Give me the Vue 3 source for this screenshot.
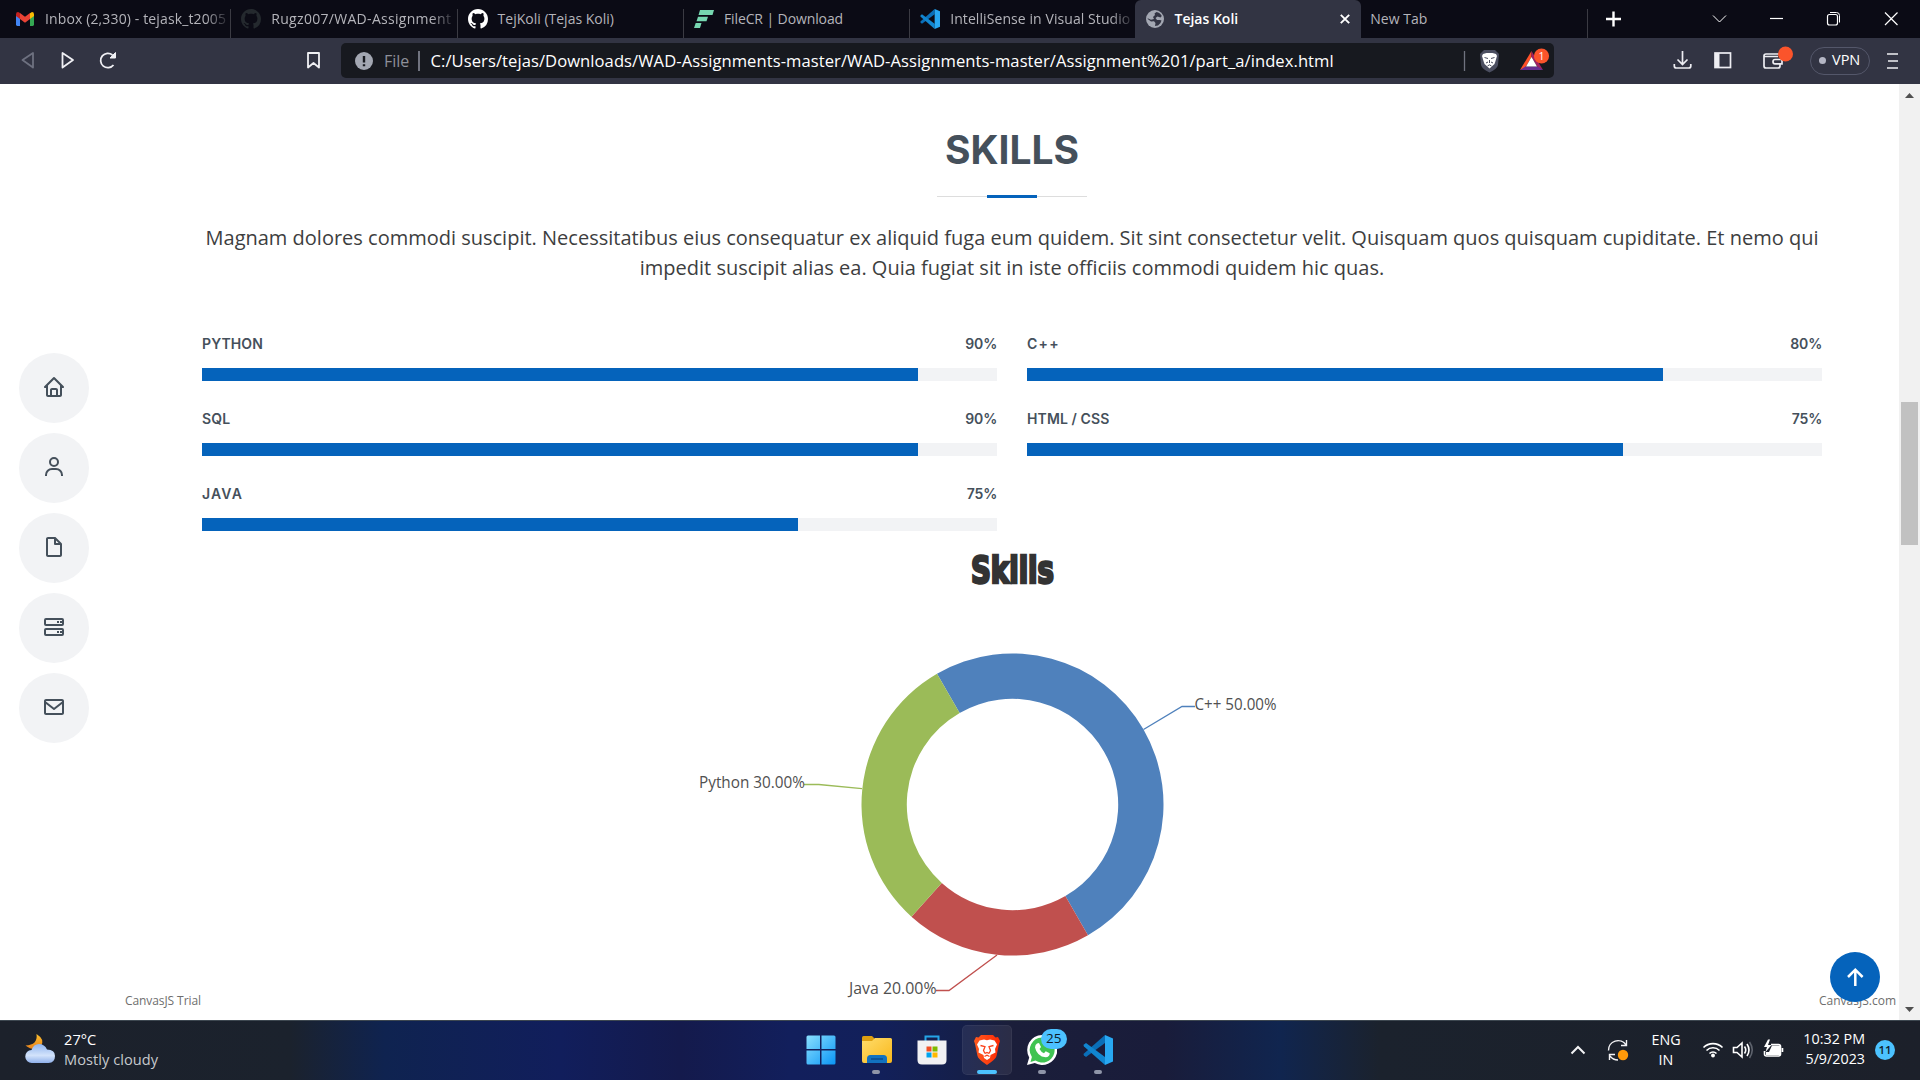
<script setup>
const github =
  'M8 0C3.58 0 0 3.58 0 8c0 3.54 2.29 6.53 5.47 7.59.4.07.55-.17.55-.38 0-.19-.01-.82-.01-1.49-2.01.37-2.53-.49-2.69-.94-.09-.23-.48-.94-.82-1.13-.28-.15-.68-.52-.01-.53.63-.01 1.08.58 1.23.82.72 1.21 1.87.87 2.33.66.07-.52.28-.87.51-1.07-1.78-.2-3.64-.89-3.64-3.95 0-.87.31-1.59.82-2.15-.08-.2-.36-1.02.08-2.12 0 0 .67-.21 2.2.82.64-.18 1.32-.27 2-.27s1.36.09 2 .27c1.53-1.04 2.2-.82 2.2-.82.44 1.1.16 1.92.08 2.12.51.56.82 1.27.82 2.15 0 3.07-1.87 3.75-3.65 3.95.29.25.54.73.54 1.48 0 1.07-.01 1.93-.01 2.2 0 .21.15.46.55.38A8.01 8.01 0 0016 8c0-4.42-3.58-8-8-8z'

const tabs = [
  { title: 'Inbox (2,330) - tejask_t2005', icon: 'gmail', fade: true, cls: 'sp-a' },
  { title: 'Rugz007/WAD-Assignment', icon: 'github-dim', fade: true, cls: 'sp-b' },
  { title: 'TejKoli (Tejas Koli)', icon: 'github' },
  { title: 'FileCR | Download', icon: 'filecr', cls: 'sp-c' },
  { title: 'IntelliSense in Visual Studio', icon: 'vscode', fade: true, cls: 'sp-d' },
  { title: 'Tejas Koli', icon: 'globe', active: true },
  { title: 'New Tab', icon: '' },
]

const leftSkills = [
  { name: 'PYTHON', value: 90 },
  { name: 'SQL', value: 90 },
  { name: 'JAVA', value: 75 },
]
const rightSkills = [
  { name: 'C++', value: 80 },
  { name: 'HTML / CSS', value: 75 },
]
const columns = [leftSkills, rightSkills]

const cx = 1012.5
const cy = 804.5
const outer = 151
const inner = 105.7
const pt = (r, deg) => {
  const a = (deg * Math.PI) / 180
  return `${(cx + r * Math.cos(a)).toFixed(2)} ${(cy + r * Math.sin(a)).toFixed(2)}`
}
const arc = (from, to) => {
  const big = to - from > 180 ? 1 : 0
  return `M${pt(outer, from)}A${outer} ${outer} 0 ${big} 1 ${pt(outer, to)}L${pt(inner, to)}A${inner} ${inner} 0 ${big} 0 ${pt(inner, from)}Z`
}
const slices = [
  { color: '#4f81bc', d: arc(-120, 60), line: 'M1143.5 729.5L1182 706.5H1195', label: 'C++ 50.00%', x: 1194.5, y: 710, w: 82 },
  { color: '#c0504e', d: arc(60, 132), line: 'M997 955L949 990.5H936', label: 'Java 20.00%', x: 849, y: 994, w: 87.5 },
  { color: '#9bbb58', d: arc(132, 240), line: 'M862 788.7L818.8 784.5H804', label: 'Python 30.00%', x: 699, y: 788, w: 106 },
]
</script>

<template>
  <div class="screen">
    <!-- tab strip -->
    <header class="tabs">
      <div v-for="t in tabs" :key="t.title" class="tab" :class="{ active: t.active, bare: !t.icon }">
        <span v-if="t.icon" class="fav">
          <svg v-if="t.icon === 'gmail'" width="18" height="14" viewBox="0 0 18 14">
            <path fill="#4285f4" d="M0 2.2V12.6Q0 14 1.3 14H4V6z" />
            <path fill="#34a853" d="M18 2.2V12.6Q18 14 16.7 14H14V6z" />
            <path fill="#c5221f" d="M0 2.2Q0 0 2 0L4 1.3V7L0 4z" />
            <path fill="#fbbc04" d="M18 2.2Q18 0 16 0L14 1.3V7L18 4z" />
            <path fill="#ea4335" d="M2 0Q3 0 4 1L9 4.8 14 1V7L9 10.7 4 7V1z" />
          </svg>
          <svg v-else-if="t.icon.startsWith('github')" width="20" height="20" viewBox="0 0 16 16">
            <path :fill="t.icon === 'github' ? '#fff' : '#24292e'" :d="github" />
          </svg>
          <svg v-else-if="t.icon === 'filecr'" width="20" height="18" viewBox="0 0 20 18">
            <path fill="#76d7b0" d="M6 0H20L18.5 5H4.5zM4 6.7H14L12.5 11.3H2.5zM1.7 13H7.5L6 18H0z" />
          </svg>
          <svg v-else-if="t.icon === 'vscode'" width="20" height="20" viewBox="0 0 30 30">
            <path fill="#0a6fb8" d="M22 0L1 18.5q-1 1 0 2L3 22 22 8z" />
            <path fill="#1186d0" d="M22 30L1 11.5q-1-1 0-2L3 8l19 14z" />
            <path fill="#28a8f2" d="M22 0l8 3.5v23L22 30z" />
          </svg>
          <svg v-else width="18" height="18" viewBox="0 0 18 18">
            <circle cx="9" cy="9" r="9" fill="#a3a7b2" />
            <path fill="#323443" d="M10.5 2Q14 2.500 15.800 6L14.500 7.500 11.500 6.500 9.500 8 11 10h3l1.500.5-1 2.500-2.500 2.500-3 .5.5-3-1.500-1.800-3 .3-3.300-2.500V8.300L5 9.800 8 9 7 7l2-2-.5-1.500z" />
          </svg>
        </span>
        <span class="title" :class="[t.cls, { fade: t.fade }]">{{ t.title }}</span>
        <svg v-if="t.active" class="close" width="10" height="10" viewBox="0 0 10 10"><path d="M.8.8l8.400 8.400M9.200.8L.8 9.200" stroke="#fff" stroke-width="1.900" /></svg>
      </div>
      <div class="win">
        <svg width="320" height="38" viewBox="1600 0 320 38" fill="none" stroke="#fff">
          <path d="M1606 19h15M1613.500 11.500v15" stroke-width="2.400" />
          <path d="M1713 15.500l6.500 6.500 6.500-6.500" stroke-width="1" />
          <path d="M1770 18.500h13" stroke-width="1.200" />
          <rect x="1827.500" y="14.500" width="10" height="10.500" rx="2" stroke-width="1.200" />
          <path d="M1830 12.500h6.500q3 0 3 3v7" stroke-width="1" />
          <path d="M1885 12.500l12.500 12.500M1897.500 12.500l-12.500 12.500" stroke-width="1.200" />
        </svg>
      </div>
    </header>

    <!-- address bar -->
    <div class="bar">
      <svg class="nav-icons" width="341" height="46" viewBox="0 38 341 46" fill="none" stroke="#f0f0f4" stroke-width="1.800" stroke-linejoin="round">
        <path d="M33 53v14.500L22.500 60z" stroke="#6e7180" />
        <path d="M62.500 53v14.500L73 60z" />
        <path d="M113.500 65A7.200 7.200 0 1 1 112.500 55" />
        <path d="M115.500 52.500v5.500h-5.500z" fill="#f0f0f4" stroke-width="1" />
        <path d="M308 53h11v14.500l-5.500-4.500-5.500 4.500z" />
      </svg>
      <div class="url">
        <svg width="18" height="18" viewBox="0 0 18 18"><circle cx="9" cy="9" r="9" fill="#a3a7b2" /><path d="M9 4v6.500M9 12.200v2" stroke="#17191f" stroke-width="2.400" /></svg>
        <span class="scheme">File</span>
        <i class="sep"></i>
        <span class="path">C:/Users/tejas/Downloads/WAD-Assignments-master/WAD-Assignments-master/Assignment%201/part_a/index.html</span>
        <svg class="shields" width="94" height="35" viewBox="1460 43 94 35">
          <path d="M1464.500 51v20" stroke="#70737f" stroke-width="1.300" />
          <path fill="#4b4e60" d="M1484 50h11l4 4-1 11q-1 4-8.500 7.500-7.500-3.500-8.500-7.500l-1-11z" />
          <path fill="#fff" d="M1483 54l3.500-1h6l3.500 1 1 2-1.500 5-1 3-5 4.500-5-4.500-1-3-1.500-5z" />
          <path fill="none" stroke="#4b4e60" stroke-width="1" d="M1484.500 57.500l3.500 1M1494.500 57.500l-3.500 1M1486 63l2-1M1493 63l-2-1M1489.500 60v3M1487.500 66l2-1.200 2 1.200" />
          <path fill="#ff5028" d="M1531.500 51L1520 70l5-2 6.500-11z" />
          <path fill="#9e1f63" d="M1531.500 51L1543 70l-5-2-6.500-11z" />
          <path fill="#662d91" d="M1520 70h23l-5.500-3.500h-12z" />
          <path fill="#fff" d="M1531.500 57l5.500 9.500h-11z" />
          <circle cx="1541.500" cy="56" r="7.600" fill="#fb542b" />
          <text x="1541.500" y="60" text-anchor="middle" font-size="10.500" fill="#fff">1</text>
        </svg>
      </div>
      <div class="tools">
        <svg width="130" height="46" viewBox="1666 38 130 46" fill="none" stroke="#ededf2" stroke-width="1.700">
          <path d="M1682.500 51v13M1677.500 59.500l5 5 5-5M1674.300 64v2q0 2 2 2h12.500q2 0 2-2v-2" />
          <rect x="1715" y="53" width="15.500" height="14.500" /><path fill="#ededf2" stroke="none" d="M1715 53h4.500v14.500h-4.500z" />
          <path d="M1780 63v3q0 2-2 2h-12q-2 0-2-2V56q0-2 2-2h13M1764 56.500h14M1782 59.500h-7q-2 0-2 2.200t2 2.200h7z" />
          <circle cx="1785.500" cy="54" r="7.500" fill="#fb542b" stroke="none" />
        </svg>
        <span class="vpn"><i></i>VPN</span>
        <svg class="menu" width="12" height="18" viewBox="0 0 12 18"><path d="M0 2h11M1 9h10M0 16h11" stroke="#f0f0f4" stroke-width="1.700" /></svg>
      </div>
    </div>

    <!-- page -->
    <main class="page">
      <div class="content">
        <h2>SKILLS</h2>
        <div class="rule"><i></i></div>
        <p>Magnam dolores commodi suscipit. Necessitatibus eius consequatur ex aliquid fuga eum quidem. Sit sint consectetur velit. Quisquam quos quisquam cupiditate. Et nemo qui impedit suscipit alias ea. Quia fugiat sit in iste officiis commodi quidem hic quas.</p>
        <div class="cols">
          <div v-for="(col, i) in columns" :key="i" class="col">
            <div v-for="s in col" :key="s.name" class="skill">
              <div class="label"><span :class="{ wide: s.name === 'JAVA' || s.name === 'C++' }">{{ s.name }}</span><span class="val">{{ s.value }}%</span></div>
              <div class="track"><div class="fill" :style="{ width: s.value + '%' }"></div></div>
            </div>
          </div>
        </div>
      </div>
      <svg class="chart" width="1899" height="480" viewBox="0 540 1899 480">
        <text class="ct" x="971" y="583" textLength="83" lengthAdjust="spacingAndGlyphs">Skills</text>
        <g v-for="s in slices" :key="s.label">
          <path :d="s.d" :fill="s.color" />
          <path :d="s.line" fill="none" :stroke="s.color" stroke-width="1.300" />
          <text class="cl" :x="s.x" :y="s.y" :textLength="s.w" lengthAdjust="spacingAndGlyphs">{{ s.label }}</text>
        </g>
        <text class="cr" x="125" y="1005" textLength="76">CanvasJS Trial</text>
        <text class="cr" x="1819" y="1005" textLength="77">CanvasJS.com</text>
      </svg>

      <nav class="side">
        <a><svg viewBox="0 0 24 24"><path d="M3 13h1v7c0 1.103.897 2 2 2h12c1.103 0 2-.897 2-2v-7h1a1 1 0 0 0 .707-1.707l-9-9a.999.999 0 0 0-1.414 0l-9 9A1 1 0 0 0 3 13zm7 7v-5h4v5h-4zm2-15.586 6 6V15l.001 5H16v-5c0-1.103-.897-2-2-2h-4c-1.103 0-2 .897-2 2v5H6v-9.586l6-6z" /></svg></a>
        <a><svg viewBox="0 0 24 24"><path d="M12 2a5 5 0 1 0 5 5 5 5 0 0 0-5-5zm0 8a3 3 0 1 1 3-3 3 3 0 0 1-3 3zm9 11v-1a7 7 0 0 0-7-7h-4a7 7 0 0 0-7 7v1h2v-1a5 5 0 0 1 5-5h4a5 5 0 0 1 5 5v1z" /></svg></a>
        <a><svg viewBox="0 0 24 24"><path d="M19.937 8.680c-.011-.032-.020-.063-.033-.094a.997.997 0 0 0-.196-.293l-6-6a.997.997 0 0 0-.293-.196c-.030-.014-.062-.022-.094-.033a.991.991 0 0 0-.259-.051C13.040 2.011 13.021 2 13 2H6c-1.103 0-2 .897-2 2v16c0 1.103.897 2 2 2h12c1.103 0 2-.897 2-2V9c0-.021-.011-.040-.013-.062a.990.990 0 0 0-.050-.258zM16.586 8H14V5.414L16.586 8zM6 20V4h6v5a1 1 0 0 0 1 1h5l.002 10H6z" /></svg></a>
        <a><svg viewBox="0 0 24 24"><path d="M20 3H4a2 2 0 0 0-2 2v4a2 2 0 0 0 2 2h16a2 2 0 0 0 2-2V5a2 2 0 0 0-2-2zm0 6H4V5h16v4zm-5-3h2v2h-2zm3 0h2v2h-2zm2 7H4a2 2 0 0 0-2 2v4a2 2 0 0 0 2 2h16a2 2 0 0 0 2-2v-4a2 2 0 0 0-2-2zm0 6H4v-4h16v4zm-5-3h2v2h-2zm3 0h2v2h-2z" /></svg></a>
        <a><svg viewBox="0 0 24 24"><path d="M20 4H4c-1.103 0-2 .897-2 2v12c0 1.103.897 2 2 2h16c1.103 0 2-.897 2-2V6c0-1.103-.897-2-2-2zm0 2v.511l-8 6.223-8-6.222V6h16zM4 18V9.044l7.386 5.745a.994.994 0 0 0 1.228 0L20 9.044 20.002 18H4z" /></svg></a>
      </nav>
      <a class="top"><svg width="50" height="50" viewBox="0 0 50 50" fill="none" stroke="#fff" stroke-width="2.500"><path d="M25.300 34V18M18 25l7.300-7.300L32.600 25" /></svg></a>
      <div class="scroll">
        <svg width="21" height="16" viewBox="0 0 21 16"><path d="M6 14h9l-4.500-5z" fill="#505050" /></svg>
        <i></i>
        <svg width="21" height="16" viewBox="0 0 21 16"><path d="M6 3h9l-4.500 5z" fill="#505050" /></svg>
      </div>
    </main>

    <!-- taskbar -->
    <footer class="task">
      <div class="weather">
        <svg width="31" height="30" viewBox="0 0 31 30">
          <defs>
            <linearGradient id="moon" x2="0" y2="1"><stop stop-color="#fcc02e" /><stop offset="1" stop-color="#e8811c" /></linearGradient>
            <linearGradient id="cloud" x2="0" y2="1"><stop stop-color="#8fb4ee" /><stop offset=".6" stop-color="#d3e3fb" /><stop offset="1" stop-color="#8fb0ea" /></linearGradient>
          </defs>
          <path fill="url(#moon)" d="M11.500 0Q21 6 15.500 12.500 9 18 .5 11.500 13 11 11.500 0z" />
          <path fill="url(#cloud)" d="M7 29a6.500 6.500 0 0 1-.5-13Q8.500 10 14 10t8 5.500Q30 15.500 30 22t-6.500 7z" />
        </svg>
        <div class="wt"><b>27°C</b><span>Mostly cloudy</span></div>
      </div>
      <div class="apps">
        <span class="app">
          <svg width="30" height="30" viewBox="0 0 30 30"><defs><linearGradient id="win" x2="1" y2="1"><stop stop-color="#8ae0ff" /><stop offset="1" stop-color="#0a95f5" /></linearGradient></defs><path fill="url(#win)" d="M2 .5h12V14H.5V2Q.5.5 2 .5zM15.500.500H28q1.500 0 1.500 1.500v12h-14zM.5 15.500H14v14H2Q.5 29.500.5 28zM15.500 15.500h14V28q0 1.500-1.500 1.500H15.500z" /></svg>
        </span>
        <span class="app folder">
          <svg width="30" height="28" viewBox="0 0 30 28"><defs><linearGradient id="fold" x2="1" y2="1"><stop stop-color="#ffdc6b" /><stop offset="1" stop-color="#f9b81b" /></linearGradient></defs><path fill="#dd9f10" d="M0 1.500Q0 0 1.500 0H10l3 3v6H0z" /><path fill="url(#fold)" d="M0 5h10l3-3h15.500Q30 2 30 3.500V25q0 2-2 2H2q-2 0-2-2z" /><path fill="#1272c0" d="M5 27v-4.500Q5 19 8.500 19h13q3.500 0 3.500 3.500V27z" /><path d="M9 23h12" stroke="#0b4c8f" stroke-width="1.500" /></svg><i></i>
        </span>
        <span class="app">
          <svg width="30" height="30" viewBox="0 0 30 30"><path d="M8.500 7V1.500h13V7" fill="none" stroke="#25a5e8" stroke-width="2" /><path fill="#f1f1f3" d="M.5 5.500h29V25q0 4.500-4.500 4.500H5Q.5 29.500.5 25z" /><path fill="#f04e24" d="M9.500 11.500h5v5h-5z" /><path fill="#7fba00" d="M15.500 11.500h5v5h-5z" /><path fill="#00a4ef" d="M9.500 17.500h5v5h-5z" /><path fill="#ffb900" d="M15.500 17.500h5v5h-5z" /></svg>
        </span>
        <span class="app on">
          <svg width="26" height="30" viewBox="0 0 26 30"><defs><linearGradient id="brv"><stop stop-color="#ff5a1f" /><stop offset="1" stop-color="#fb2a06" /></linearGradient></defs><path fill="url(#brv)" d="M7 0h12l2.500 2.500L24 2l2 4-1 3-2.500 12Q22 24 13 30 4 24 3.500 21L1 9 0 6l2-4 2.500.5z" /><path fill="#fff" d="M5.500 5.500L10 4.500l3 .7 3-.7 4.500 1 2.500 4-2 4.500.5 3.500-5 2.500L16 23l-3 2-3-2-.5-3-5-2.500L5 14 3 9.500z" /><path fill="none" stroke="#fb4219" stroke-width="1.300" d="M6.500 10.500l4.500 1.200L9.500 15.500l1.500 3M19.500 10.500l-4.500 1.200L16.500 15.500l-1.500 3M11 18.500l2-1 2 1M10.500 21.500l2.500-1.300 2.500 1.300" /></svg><i></i>
        </span>
        <span class="app">
          <svg width="30" height="30" viewBox="0 0 30 30"><path fill="#fff" d="M15 0a15 15 0 1 1-7.200 28L0 30l2.200-7.500A15 15 0 0 1 15 0z" /><path fill="#3fc351" d="M15 2.500A12.500 12.500 0 1 1 8.500 25.600L3.500 27l1.400-5A12.500 12.500 0 0 1 15 2.500z" /><path fill="#fff" d="M10 8.500l2-.5 2 4-1.500 2q1.500 3 4.500 4.200l1.700-1.900 4 2q0 3.700-4 4Q10 21.500 8 12.500q.2-3 2-4z" /></svg><em>25</em><i></i>
        </span>
        <span class="app">
          <svg width="30" height="30" viewBox="0 0 30 30"><path fill="#0a6fb8" d="M22 0L1 18.500q-1 1 0 2L3 22 22 8z" /><path fill="#1186d0" d="M22 30L1 11.500q-1-1 0-2L3 8l19 14z" /><path fill="#28a8f2" d="M22 0l8 3.500v23L22 30z" /></svg><i></i>
        </span>
      </div>
      <div class="tray">
        <svg width="66" height="60" viewBox="1566 1020 66 60" fill="none" stroke="#f3f3f5">
          <path d="M1571.500 1053.500l6.500-6.500 6.500 6.500" stroke-width="2" />
          <path d="M1608.500 1050.500a9.500 9.500 0 0 1 17.500-5.500M1626.500 1040v5.500h-5.500M1609.500 1060v-5.500h5.500M1610 1056q3 4 8 4" stroke-width="1.400" />
          <circle cx="1623" cy="1055" r="5.200" fill="#ff9a0a" stroke="none" />
        </svg>
        <div class="lang"><span>ENG</span><span>IN</span></div>
        <svg class="sys" width="86" height="60" viewBox="1700 1020 86 60" fill="none" stroke="#fff" stroke-width="1.600">
          <path d="M1703.500 1047.500a13.500 13.500 0 0 1 19 0M1706.500 1050.500a9.200 9.200 0 0 1 13 0M1709.500 1053.500a5 5 0 0 1 7 0" />
          <circle cx="1713" cy="1055.500" r="1.900" fill="#fff" stroke="none" />
          <path d="M1733.500 1047.500h3.500l5-4.500v14l-5-4.500h-3.500zM1744.500 1046.500q2.500 3.500 0 7M1747 1044q4 6 0 12" />
          <path d="M1749.500 1042q5.500 8 0 16" stroke="#5d626c" />
          <path d="M1771 1044.500h7.500q2 0 2 2v7.500q0 2-2 2h-12q-2 0-2-2v-3M1782.500 1048v4" />
          <path fill="#fff" stroke="none" d="M1772 1045.500h8v9.500h-14v-3h3zM1768 1039.500l-4 7.500h3l-1.500 5 6-7h-3.500l2-5.500z" />
        </svg>
        <div class="clock"><span>10:32 PM</span><span>5/9/2023</span></div>
        <span class="note">11</span>
      </div>
    </footer>
  </div>
</template>

<style>
body { margin: 0; overflow: hidden; }
</style>

<style scoped>
.screen { width: 1920px; height: 1080px; display: flex; flex-direction: column; overflow: hidden; font-family: "Open Sans", "Noto Sans", sans-serif; background: #fff; }
svg { display: block; flex: none; }

.tabs { height: 38px; padding-left: 5px; background: #0b0b15; display: flex; flex: none; }
.tab { box-sizing: border-box; width: 226.3px; display: flex; align-items: center; padding-left: 10px; position: relative; color: #b4b4ba; font-size: 14px; flex: none; }
.tab::after { content: ""; position: absolute; right: 0; top: 9px; bottom: 0; width: 1px; background: #3b3b43; }
.tab:nth-child(5)::after, .tab.active::after { display: none; }
.tab.active { margin-left: -1.500px; padding-left: 10.500px; background: #323443; color: #fff; font-weight: 600; border-radius: 6px 6px 0 0; }
.fav { width: 20px; display: flex; justify-content: center; margin-right: 10px; }
.title { line-height: 20px; white-space: nowrap; width: 182px; }
.active .title { width: 160px; margin-left: -1px; }
.fade { -webkit-mask-image: linear-gradient(90deg, #000 88%, rgba(0, 0, 0, .15)); mask-image: linear-gradient(90deg, #000 88%, rgba(0, 0, 0, .15)); }
.sp-a { letter-spacing: .13px; }
.sp-b { letter-spacing: .3px; }
.sp-c { letter-spacing: -.1px; }
.sp-d { letter-spacing: .08px; }
.close { margin-left: 6px; }
.tab.bare { padding-left: 9px; }
.win { margin-left: auto; }

.bar { height: 46px; background: #323443; display: flex; align-items: center; flex: none; }
.url { box-sizing: border-box; width: 1213px; height: 35px; margin-top: -1px; background: #17191f; border-radius: 5px; display: flex; align-items: center; padding-left: 14px; font-size: 16.600px; white-space: nowrap; }
.scheme { color: #8e9099; margin-left: 11px; width: 34px; font-size: 16px; }
.sep { width: 1.500px; height: 20px; background: #70737f; }
.path { color: #fff; margin-left: 11px; letter-spacing: .06px; }
.shields { margin-left: auto; }
.tools { display: flex; align-items: center; margin-left: 112px; }
.vpn { box-sizing: border-box; width: 60px; height: 28px; margin: -1px 0 0 14px; border: 1.500px solid #54576a; border-radius: 14px; display: flex; align-items: center; color: #fff; font-size: 14.500px; line-height: 22px; padding: 0 0 1px 8px; }
.vpn i { width: 7px; height: 7px; border-radius: 50%; background: #b4b6c4; margin-right: 6px; }
.menu { margin: -1px 0 0 17px; }

.page { height: 936px; flex: none; position: relative; overflow: hidden; }
.content { margin: 0 77px 0 202px; height: 456px; width: 1620px; }
h2 { margin: 0; padding-top: 42px; font: 700 39px/48px Inter, sans-serif; color: #45505b; text-align: center; }
.rule { width: 150px; height: 1px; margin: 22px auto 0; background: #ddd; display: flex; justify-content: center; align-items: center; }
.rule i { width: 50px; height: 3px; background: #0563bb; flex: none; }
p { margin: 26px 0 0; font-size: 20px; line-height: 30px; color: #3d3e40; text-align: center; }
.cols { display: flex; gap: 30px; margin-top: 49px; }
.col { width: 795px; }
.skill { height: 75px; }
.label { display: flex; justify-content: space-between; height: 36px; font: 600 14px/24px Inter, sans-serif; color: #45505b; letter-spacing: .1px; }
.label .val { letter-spacing: -.2px; }
.label .wide { letter-spacing: 1.200px; }
.track { height: 13px; background: #f2f3f5; }
.fill { height: 13px; background: #0563bb; }
.chart { font-family: "Open Sans", sans-serif; }
.ct { font: 700 38px "DejaVu Sans Condensed", "DejaVu Sans", sans-serif; fill: #333; stroke: #333; stroke-width: 2.600px; }
.cl { font-size: 15.500px; fill: #505050; }
.cr { font-size: 12px; fill: #6e6e6e; }

.side { position: absolute; left: 19px; top: 269px; display: flex; flex-direction: column; gap: 10px; }
.side a { width: 70px; height: 70px; border-radius: 50%; background: #f2f3f5; display: flex; align-items: center; justify-content: center; }
.side svg { width: 24px; height: 24px; fill: #45505b; margin-top: -3px; }
.top { position: absolute; left: 1830px; top: 868px; width: 50px; height: 50px; border-radius: 50%; background: #0563bb; }
.scroll { position: absolute; right: 0; top: 0; width: 21px; height: 936px; background: #f1f1f1; display: flex; flex-direction: column; justify-content: space-between; align-items: center; }
.scroll i { width: 17px; height: 143px; background: #c1c1c1; margin-top: -157px; }

.task { height: 60px; box-sizing: border-box; border-top: 1px solid #3d4750; flex: none; display: flex; align-items: center; background: linear-gradient(90deg, #1c212b 0, #1b222d 290px, #0f2350 385px, #111e5c 560px, #141a4c 680px, #121f5c 790px, #12205a 880px, #151f4a 960px, #1b1e3a 1010px, #191c3a 1165px, #10254f 1280px, #1b222d 1380px, #1c202a 1920px); color: #fff; font-size: 14.600px; line-height: 20px; }
.weather { display: flex; align-items: center; margin-left: 25px; width: 768.500px; }
.weather svg { margin-top: -3px; }
.wt { display: flex; flex-direction: column; margin: -4px 0 0 8px; letter-spacing: .05px; }
.wt b { font-weight: 400; }
.wt span { color: #c6c9cd; }
.apps { display: flex; margin-top: -1px; }
.app { width: 55.300px; height: 50px; display: flex; align-items: center; justify-content: center; position: relative; border-radius: 5px; }
.app.folder svg { margin-left: 2px; }
.app.on { width: 50px; margin: 0 2.650px; background: rgba(255, 255, 255, .07); box-shadow: inset 0 0 0 1px rgba(255, 255, 255, .05); }
.app i { position: absolute; bottom: 1px; left: calc(50% - 4px); width: 8px; height: 4px; border-radius: 2px; background: #8f95a8; }
.app.on i { left: 15px; width: 20px; background: #4cc2ff; }
.app em { position: absolute; left: 26px; top: 4px; width: 26px; height: 20px; border-radius: 10px; background: #4cc2ff; color: #0c1c2a; font-style: normal; font-size: 13.500px; line-height: 19px; text-align: center; }
.tray { display: flex; align-items: center; margin-left: auto; padding-right: 25px; font-size: 14.300px; }
.tray svg { margin-top: -1px; }
.lang { width: 68px; display: flex; flex-direction: column; align-items: center; margin-top: -1px; }
.clock { width: 80px; display: flex; flex-direction: column; align-items: flex-end; margin: -3px 1px 0 -1px; }
.note { width: 20px; height: 20px; border-radius: 50%; background: #4cc2ff; color: #10202c; font-size: 11.500px; font-weight: 600; text-align: center; margin: -2px 0 0 9px; }
</style>
